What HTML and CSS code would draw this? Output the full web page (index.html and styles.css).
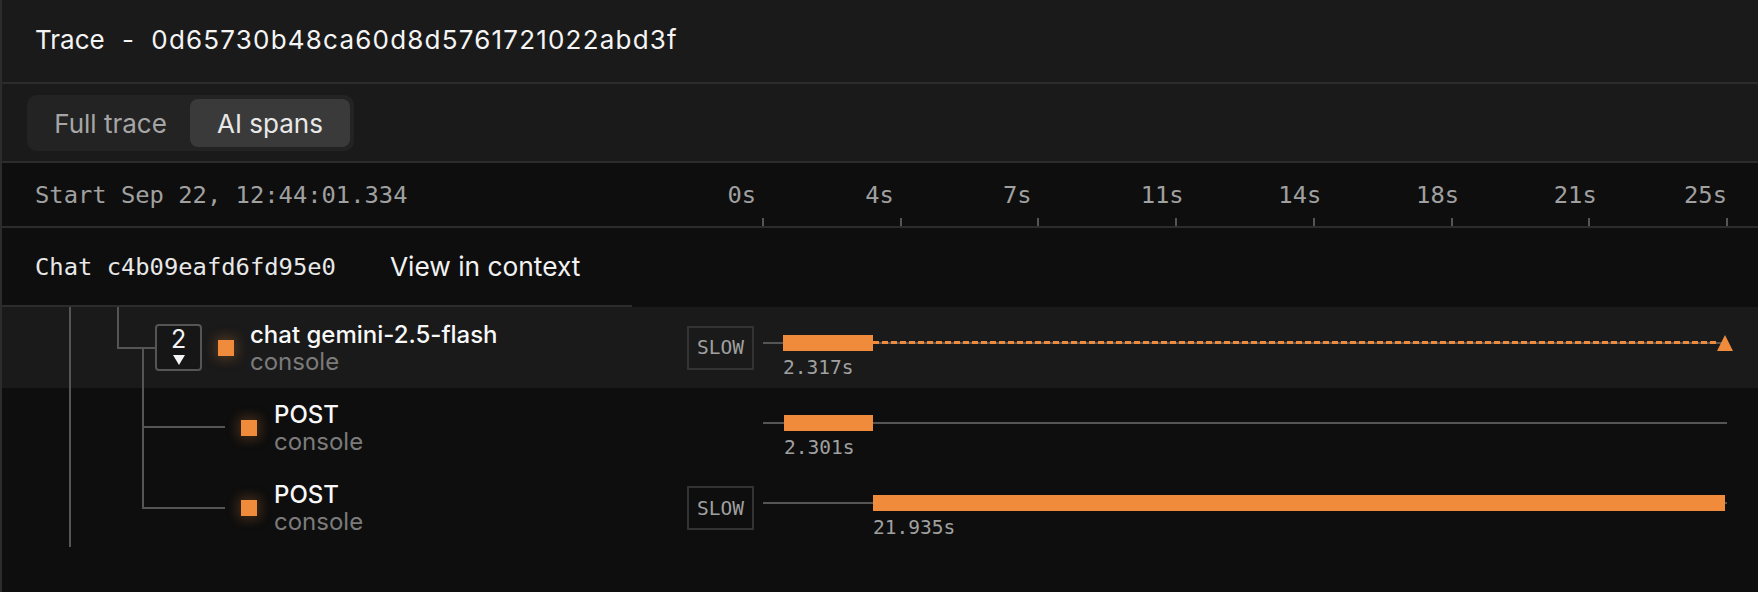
FILE: index.html
```html
<!DOCTYPE html>
<html lang="en">
<head>
<meta charset="utf-8">
<title>Trace</title>
<link rel="stylesheet" href="styles.css">
</head>
<body>
<div class="app">
  <header class="titlebar">
    <h1 class="title">Trace - <span class="tid">0d65730b48ca60d8d5761721022abd3f</span></h1>
  </header>

  <div class="tabsbar">
    <div class="seg">
      <button class="tab">Full trace</button>
      <button class="tab active">AI spans</button>
    </div>
  </div>

  <div class="timehead grid">
    <div class="start mono">Start Sep 22, 12:44:01.334</div>
    <div></div>
    <div class="axis">
      <span class="tick" style="left:0%"></span>
      <span class="tick" style="left:14.2857%"></span>
      <span class="tick" style="left:28.5714%"></span>
      <span class="tick" style="left:42.8571%"></span>
      <span class="tick" style="left:57.1429%"></span>
      <span class="tick" style="left:71.4286%"></span>
      <span class="tick" style="left:85.7143%"></span>
      <span class="tick" style="left:100%"></span>
      <span class="tlabel mono" style="left:0%">0s</span>
      <span class="tlabel mono" style="left:14.2857%">4s</span>
      <span class="tlabel mono" style="left:28.5714%">7s</span>
      <span class="tlabel mono" style="left:42.8571%">11s</span>
      <span class="tlabel mono" style="left:57.1429%">14s</span>
      <span class="tlabel mono" style="left:71.4286%">18s</span>
      <span class="tlabel mono" style="left:85.7143%">21s</span>
      <span class="tlabel mono last">25s</span>
    </div>
  </div>

  <div class="chatrow">
    <span class="chatid mono">Chat c4b09eafd6fd95e0</span>
    <span class="ctx">View in context</span>
  </div>

  <div class="rows">
    <div class="row grid sel first">
      <div class="name lvl1">
        <div class="collapse"><span class="count">2</span><i class="caret"></i></div>
        <span class="dot"></span>
        <div class="label">
          <div class="ttl">chat gemini-2.5-flash</div>
          <div class="sub">console</div>
        </div>
      </div>
      <div class="badgecell"><span class="slow mono">SLOW</span></div>
      <div class="lane">
        <div class="track"></div>
        <div class="dash" style="left:11.41%"></div>
        <div class="span" style="left:2.07%;width:9.34%">
          <div class="bar"></div>
          <div class="dur mono">2.317s</div>
        </div>
        <i class="tri"></i>
      </div>
    </div>

    <div class="row grid">
      <div class="name lvl2">
        <span class="dot"></span>
        <div class="label">
          <div class="ttl">POST</div>
          <div class="sub">console</div>
        </div>
      </div>
      <div class="badgecell"></div>
      <div class="lane">
        <div class="track"></div>
        <div class="span" style="left:2.18%;width:9.23%">
          <div class="bar"></div>
          <div class="dur mono">2.301s</div>
        </div>
      </div>
    </div>

    <div class="row grid">
      <div class="name lvl2">
        <span class="dot"></span>
        <div class="label">
          <div class="ttl">POST</div>
          <div class="sub">console</div>
        </div>
      </div>
      <div class="badgecell"><span class="slow mono">SLOW</span></div>
      <div class="lane">
        <div class="track"></div>
        <div class="span" style="left:11.41%;width:88.38%">
          <div class="bar"></div>
          <div class="dur mono">21.935s</div>
        </div>
      </div>
    </div>

    <svg class="tree" width="685" height="285" viewBox="0 0 685 285" shape-rendering="crispEdges" aria-hidden="true">
      <path d="M68 0 V240" />
      <path d="M116 0 V41 H153" />
      <path d="M141 41 V201 H223 M141 120 H223" />
    </svg>
  </div>
</div>
</body>
</html>
```

FILE: styles.css
```css
* { box-sizing: border-box; }

html, body {
  margin: 0;
  padding: 0;
}

body {
  background: #0e0e0e;
  color: #ededed;
  font-family: Inter, "Noto Sans", "Liberation Sans", sans-serif;
}

.mono {
  font-family: "DejaVu Sans Mono", "Liberation Mono", monospace;
}

.app {
  border-left: 2px solid #2c2c2c;
  height: 592px;
  overflow: hidden;
}

.grid {
  display: grid;
  grid-template-columns: 685px 76px 964px;
}

/* title */
.titlebar {
  height: 84px;
  background: #1a1a1a;
  border-bottom: 2px solid #2c2c2c;
  padding: 24px 0 0 33px;
}

.title {
  margin: 0;
  font-size: 26px;
  line-height: 32px;
  font-weight: 400;
  color: #f4f4f4;
  word-spacing: 10px;
}

.tid {
  letter-spacing: 1.2px;
}

/* tabs */
.tabsbar {
  height: 79px;
  background: #1a1a1a;
  border-bottom: 2px solid #2c2c2c;
  padding: 11px 0 0 25px;
}

.seg {
  display: inline-flex;
  background: #232323;
  border-radius: 10px;
  padding: 4px;
}

.tab {
  width: 159px;
  height: 48px;
  border: 0;
  border-radius: 8px;
  background: transparent;
  color: #a6a6a6;
  font-family: inherit;
  font-size: 26px;
  padding: 0;
  display: flex;
  align-items: center;
  justify-content: center;
}

.tab.active {
  width: 160px;
  background: #3a3a3a;
  color: #e8e8e8;
}

/* time header */
.timehead {
  height: 65px;
  border-bottom: 2px solid #2c2c2c;
}

.start {
  padding-left: 33px;
  padding-top: 18px;
  font-size: 23.8px;
  line-height: 28px;
  color: #a0a0a0;
}

.axis {
  position: relative;
}

.tick {
  position: absolute;
  bottom: 0;
  width: 2px;
  height: 8px;
  margin-left: -1px;
  background: #555;
}

.tlabel {
  position: absolute;
  top: 18px;
  margin-left: -35.5px;
  font-size: 23.8px;
  line-height: 28px;
  color: #a0a0a0;
  white-space: nowrap;
}

.tlabel.last {
  right: 0;
  margin-left: 0;
}

/* chat row */
.chatrow {
  width: 630px;
  height: 79px;
  border-bottom: 2px solid #2c2c2c;
  display: flex;
  align-items: center;
  padding-left: 33px;
  gap: 54px;
}

.chatid {
  font-size: 23.8px;
  line-height: 28px;
  color: #e8e8e8;
}

.ctx {
  font-size: 26.3px;
  line-height: 28px;
  color: #f2f2f2;
}

/* span rows */
.rows {
  position: relative;
}

.row {
  height: 80px;
  align-items: center;
}

.row.first {
  height: 81px;
}

.row.sel {
  background: #1a1a1a;
}

.name {
  display: flex;
  align-items: center;
}

.lvl1 {
  padding-left: 153px;
}

.lvl2 {
  padding-left: 239px;
}

.collapse {
  width: 47px;
  height: 47px;
  border: 2px solid #555;
  border-radius: 4px;
  background: #161616;
  display: flex;
  flex-direction: column;
  align-items: center;
  justify-content: center;
  gap: 6px;
  margin-right: 16px;
  position: relative;
  z-index: 2;
}

.count {
  font-size: 25px;
  line-height: 19px;
  color: #f4f4f4;
}

.caret {
  width: 0;
  height: 0;
  border-left: 6.5px solid transparent;
  border-right: 6.5px solid transparent;
  border-top: 10px solid #f4f4f4;
}

.dot {
  width: 16px;
  height: 16px;
  background: #ef8b3b;
  box-shadow: 0 0 12px 3px rgba(239, 139, 59, 0.25);
  flex: none;
}

.lvl1 .dot {
  margin-right: 16px;
}

.lvl2 .dot {
  margin-right: 17px;
}

.label {
  display: flex;
  flex-direction: column;
}

.ttl {
  font-size: 24px;
  line-height: 27px;
  font-weight: 500;
  color: #f8f8f8;
}

.sub {
  font-size: 24px;
  line-height: 27px;
  color: #7b7b7b;
}

.badgecell {
  display: flex;
  align-items: center;
}

.slow {
  width: 67px;
  height: 44px;
  border: 2px solid #333;
  display: flex;
  align-items: center;
  justify-content: center;
  font-size: 19.5px;
  color: #a0a0a0;
}

.lane {
  position: relative;
  align-self: stretch;
}

.track {
  position: absolute;
  left: 0;
  right: 0;
  top: calc(50% - 6px);
  height: 2px;
  background: #555;
}

.dash {
  position: absolute;
  right: 10px;
  top: calc(50% - 6.5px);
  height: 3px;
  background: repeating-linear-gradient(90deg, #ef8b3b 0 6px, transparent 6px 9px);
}

.span {
  position: absolute;
  top: calc(50% - 13px);
  display: flex;
  flex-direction: column;
}

.bar {
  height: 16px;
  background: #ef8b3b;
}

.dur {
  margin-top: 6px;
  font-size: 19.5px;
  line-height: 22px;
  color: #a0a0a0;
  white-space: nowrap;
}

.tri {
  position: absolute;
  right: -6px;
  top: calc(50% - 13px);
  width: 0;
  height: 0;
  border-left: 8px solid transparent;
  border-right: 8px solid transparent;
  border-bottom: 16px solid #ef8b3b;
}

.tree {
  position: absolute;
  left: 0;
  top: 0;
  pointer-events: none;
  z-index: 1;
}

.tree path {
  fill: none;
  stroke: #555;
  stroke-width: 2;
}
```
